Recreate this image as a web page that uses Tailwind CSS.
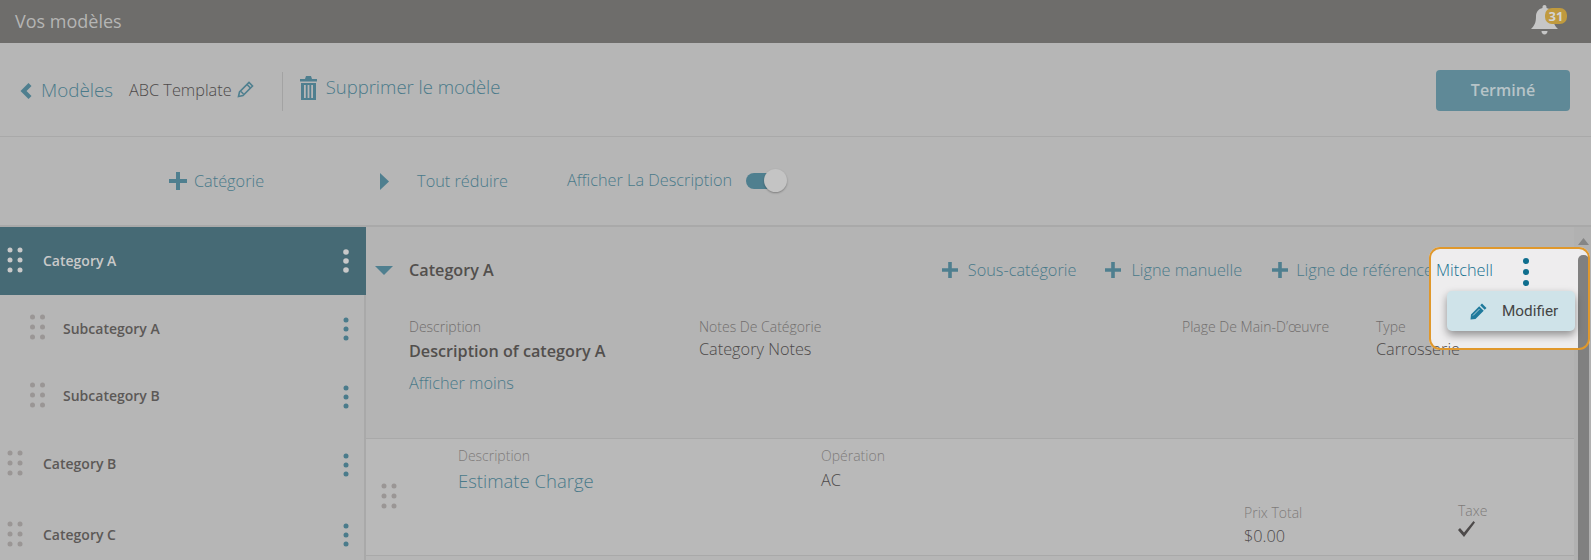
<!DOCTYPE html>
<html>
<head>
<meta charset="UTF-8">
<title>Vos modèles</title>
<script src="https://cdn.jsdelivr.net/npm/@tailwindcss/browser@4"></script>
</head>
<body class="font-['Open_Sans',sans-serif] bg-[#b6b6b6]">
<div class="relative w-[1591px] h-[560px] overflow-hidden bg-[#b6b6b6]">

  <!-- top bar -->
  <header class="h-[43px] bg-[#6e6d6b] flex items-center justify-between pl-[15px] pr-[24px]">
    <span class="text-[18px] text-[#b5b5b4]">Vos modèles</span>
    <div class="relative w-[36px] h-[43px]">
      <svg class="absolute left-0 top-[5px]" width="27" height="30" viewBox="0 0 27 30" fill="#c6c6c6"><path d="M13.5 0c1.2 0 2 .9 2 2v1c4.200 .9 6.500 4.200 6.500 8.500 0 6 1.500 9 5 12.500H0c3.500-3.500 5-6.500 5-12.500C5 7.200 7.300 3.900 11.500 3V2c0-1.100.8-2 2-2z"/><path d="M10.500 26h6c0 2-1.300 3.500-3 3.500s-3-1.500-3-3.500z"/></svg>
      <span class="absolute left-[14px] top-[8px] w-[22px] h-[16px] rounded-[7px] bg-[#c09a3e] text-[#d4d4d4] text-[13px] font-bold leading-[16px] text-center">31</span>
    </div>
  </header>

  <!-- title row -->
  <div class="h-[94px] border-b border-[#a9a9a9] flex items-center relative">
    <svg class="ml-[20px] mt-[3px]" width="12" height="16" viewBox="0 0 12 16" fill="#4f7f8f"><path d="M8.500 0L11.500 3 6.500 8l5 5-3 3L.5 8z"/></svg>
    <span class="ml-[9px] mt-[2px] text-[18.800px] font-light text-[#4a7a8a]">Modèles</span>
    <span class="ml-[16px] mt-[1px] text-[16.300px] font-light text-[#4d4a4a]">ABC Template</span>
    <svg class="ml-[5px] mt-[-1px]" width="17" height="17" viewBox="0 0 17 17" fill="none" stroke="#4f7f8f" stroke-width="1.600"><path d="M1.500 15.500l1-4.500L12 1.500l3.500 3.500L6 14.500z"/><path d="M10 3.500l3.500 3.500M4 10.500l2.500 2.500"/></svg>
    <div class="ml-[28px] w-px h-[39px] mt-[4px] bg-[#a3a3a3]"></div>
    <svg class="ml-[17px] -mt-[4px]" width="17" height="24" viewBox="0 0 17 24" fill="#4f7f8f"><path d="M6 0h5l1 3h5v2.500H0V3h5z"/><path fill-rule="evenodd" d="M1 7h15v17H1zM4 9v13h1.800V9zm3.600 0v13h1.800V9zm3.600 0v13H13V9z"/></svg>
    <span class="ml-[9px] -mt-[5px] text-[18.500px] font-light text-[#4a7a8a]">Supprimer le modèle</span>
    <button class="ml-auto mr-[21px] mt-[1px] w-[134px] h-[41px] rounded-[4px] bg-[#5f8997] text-[#b7c4c8] text-[16px] font-semibold">Terminé</button>
  </div>

  <!-- toolbar -->
  <div class="h-[90px] border-b-2 border-[#a9a9a9] flex items-center text-[16.300px] font-light text-[#4a7a8a]">
    <svg class="ml-[169px]" width="18" height="18" viewBox="0 0 18 18" fill="#4f7f8f"><path d="M7 0h4v7h7v4h-7v7H7v-7H0V7h7z"/></svg>
    <span class="ml-[7px] mt-[1px]">Catégorie</span>
    <svg class="ml-[116px]" width="9" height="17" viewBox="0 0 9 17" fill="#4f7f8f"><path d="M0 0l9 8.500L0 17z"/></svg>
    <span class="ml-[28px]">Tout réduire</span>
    <span class="ml-[59px] -mt-[2px]">Afficher La Description</span>
    <div class="relative ml-[14px] w-[41px] h-[24px]">
      <div class="absolute left-0 top-[4px] w-[38px] h-[16px] rounded-full bg-[#4f7f8f]"></div>
      <div class="absolute left-[18px] top-0 w-[23px] h-[23px] rounded-full bg-[#c4c4c4] shadow-[0_1px_2px_rgba(0,0,0,0.3)]"></div>
    </div>
  </div>

  <div class="flex h-[333px]">
    <!-- sidebar -->
    <aside class="w-[366px] shrink-0 border-r-2 border-[#a9a9a9]">
      <div class="h-[68px] -mr-[2px] bg-[#466a75] flex items-center pl-[7px] pr-[17px] relative">
        <svg class="-mt-[2px]" width="16" height="26" viewBox="0 0 16 26" fill="#c9c9c9"><circle cx="3" cy="3" r="2.500"/><circle cx="13" cy="3" r="2.500"/><circle cx="3" cy="13" r="2.500"/><circle cx="13" cy="13" r="2.500"/><circle cx="3" cy="23" r="2.500"/><circle cx="13" cy="23" r="2.500"/></svg>
        <span class="ml-[20px] -mt-[2px] text-[14px] font-semibold text-[#c9c9c9]">Category A</span>
        <svg class="ml-auto" width="6" height="24" viewBox="0 0 6 24" fill="#c9c9c9"><circle cx="3" cy="3" r="2.800"/><circle cx="3" cy="12" r="2.800"/><circle cx="3" cy="21" r="2.800"/></svg>
      </div>
      <div class="h-[68px] flex items-center pl-[30px] pr-[15px]">
        <svg class="-mt-[4px]" width="16" height="26" viewBox="0 0 16 26" fill="#9a9695"><circle cx="2.500" cy="3" r="2.500"/><circle cx="12.500" cy="3" r="2.500"/><circle cx="2.500" cy="13" r="2.500"/><circle cx="12.500" cy="13" r="2.500"/><circle cx="2.500" cy="23" r="2.500"/><circle cx="12.500" cy="23" r="2.500"/></svg>
        <span class="ml-[17px] -mt-[2px] text-[14px] font-semibold text-[#5c5957]">Subcategory A</span>
        <svg class="ml-auto" width="6" height="24" viewBox="0 0 6 24" fill="#4a7b8b"><circle cx="3" cy="3" r="2.500"/><circle cx="3" cy="12" r="2.500"/><circle cx="3" cy="21" r="2.500"/></svg>
      </div>
      <div class="h-[67px] flex items-center pl-[30px] pr-[15px]">
        <svg class="-mt-[3px]" width="16" height="26" viewBox="0 0 16 26" fill="#9a9695"><circle cx="2.500" cy="3" r="2.500"/><circle cx="12.500" cy="3" r="2.500"/><circle cx="2.500" cy="13" r="2.500"/><circle cx="12.500" cy="13" r="2.500"/><circle cx="2.500" cy="23" r="2.500"/><circle cx="12.500" cy="23" r="2.500"/></svg>
        <span class="ml-[17px] -mt-[2px] text-[14px] font-semibold text-[#5c5957]">Subcategory B</span>
        <svg class="ml-auto" width="6" height="24" viewBox="0 0 6 24" fill="#4a7b8b"><circle cx="3" cy="3" r="2.500"/><circle cx="3" cy="12" r="2.500"/><circle cx="3" cy="21" r="2.500"/></svg>
      </div>
      <div class="h-[69px] flex items-center pl-[7px] pr-[15px]">
        <svg class="-mt-[4px]" width="16" height="26" viewBox="0 0 16 26" fill="#9a9695"><circle cx="3" cy="3" r="2.500"/><circle cx="13" cy="3" r="2.500"/><circle cx="3" cy="13" r="2.500"/><circle cx="13" cy="13" r="2.500"/><circle cx="3" cy="23" r="2.500"/><circle cx="13" cy="23" r="2.500"/></svg>
        <span class="ml-[20px] -mt-[2px] text-[14px] font-semibold text-[#5c5957]">Category B</span>
        <svg class="ml-auto" width="6" height="24" viewBox="0 0 6 24" fill="#4a7b8b"><circle cx="3" cy="3" r="2.500"/><circle cx="3" cy="12" r="2.500"/><circle cx="3" cy="21" r="2.500"/></svg>
      </div>
      <div class="h-[72px] flex items-center pl-[7px] pr-[15px]">
        <svg class="-mt-[2px]" width="16" height="26" viewBox="0 0 16 26" fill="#9a9695"><circle cx="3" cy="3" r="2.500"/><circle cx="13" cy="3" r="2.500"/><circle cx="3" cy="13" r="2.500"/><circle cx="13" cy="13" r="2.500"/><circle cx="3" cy="23" r="2.500"/><circle cx="13" cy="23" r="2.500"/></svg>
        <span class="ml-[20px] -mt-[2px] text-[14px] font-semibold text-[#5c5957]">Category C</span>
        <svg class="ml-auto" width="6" height="24" viewBox="0 0 6 24" fill="#4a7b8b"><circle cx="3" cy="3" r="2.500"/><circle cx="3" cy="12" r="2.500"/><circle cx="3" cy="21" r="2.500"/></svg>
      </div>
    </aside>

    <!-- main column -->
    <main class="flex-1 min-w-0">
      <section class="h-[212px] bg-[#b4b4b4] border-b border-[#a9a9a9]">
        <div class="h-[86px] flex items-center">
          <svg class="ml-[9px] mt-[1px]" width="18" height="9" viewBox="0 0 18 9" fill="#4f7f8f"><path d="M0 0h18L9 9z"/></svg>
          <span class="ml-[16px] text-[16.200px] font-semibold text-[#524f4d]">Category A</span>
          <svg class="ml-[448px]" width="16" height="16" viewBox="0 0 16 16" fill="#4f7f8f"><path d="M6.200 0h3.600v6.200H16v3.600H9.800V16H6.200V9.800H0V6.200h6.200z"/></svg>
          <span class="ml-[10px] text-[16.300px] font-light text-[#4a7a8a]">Sous-catégorie</span>
          <svg class="ml-[29px]" width="16" height="16" viewBox="0 0 16 16" fill="#4f7f8f"><path d="M6.200 0h3.600v6.200H16v3.600H9.800V16H6.200V9.800H0V6.200h6.200z"/></svg>
          <span class="ml-[10px] text-[16.300px] font-light text-[#4a7a8a]">Ligne manuelle</span>
          <svg class="ml-[30px]" width="16" height="16" viewBox="0 0 16 16" fill="#4f7f8f"><path d="M6.200 0h3.600v6.200H16v3.600H9.800V16H6.200V9.800H0V6.200h6.200z"/></svg>
          <span class="ml-[8px] text-[16.300px] font-light text-[#4a7a8a] whitespace-nowrap">Ligne de référence</span>
        </div>
        <div class="flex pt-[4px]">
          <div class="ml-[43px] w-[290px]">
            <div class="text-[14px] leading-[20px] font-light text-[#716e6d]">Description</div>
            <div class="mt-[2px] text-[16.200px] leading-[24px] font-semibold text-[#524f4d]">Description of category A</div>
            <div class="mt-[9px] text-[16.300px] leading-[22px] font-light text-[#4a7a8a]">Afficher moins</div>
          </div>
          <div class="w-[483px]">
            <div class="text-[14px] leading-[20px] font-light text-[#716e6d]">Notes De Catégorie</div>
            <div class="text-[16.300px] leading-[24px] font-light text-[#4d4a4a]">Category Notes</div>
          </div>
          <div class="w-[194px]">
            <div class="text-[14px] leading-[20px] font-light text-[#716e6d]">Plage De Main-D’œuvre</div>
          </div>
          <div class="relative z-20">
            <div class="text-[14px] leading-[20px] font-light text-[#716e6d]">Type</div>
            <div class="text-[16.300px] leading-[24px] font-light text-[#4d4a4a]">Carrosserie</div>
          </div>
        </div>
      </section>
      <section class="h-[117px] bg-[#b9b9b9] border-b border-[#a9a9a9] flex">
        <svg class="ml-[15px] mt-[44px]" width="16" height="26" viewBox="0 0 16 26" fill="#9a9695"><circle cx="3" cy="3" r="2.500"/><circle cx="13" cy="3" r="2.500"/><circle cx="3" cy="13" r="2.500"/><circle cx="13" cy="13" r="2.500"/><circle cx="3" cy="23" r="2.500"/><circle cx="13" cy="23" r="2.500"/></svg>
        <div class="ml-[61px] w-[363px] pt-[7px]">
          <div class="text-[14px] leading-[20px] font-light text-[#7e7b7a]">Description</div>
          <div class="mt-[1px] text-[18.500px] leading-[28px] font-light text-[#4a7a8a]">Estimate Charge</div>
        </div>
        <div class="w-[423px] pt-[7px]">
          <div class="text-[14px] leading-[20px] font-light text-[#7e7b7a]">Opération</div>
          <div class="text-[16.300px] leading-[28px] font-light text-[#4d4a4a]">AC</div>
        </div>
        <div class="w-[214px] pt-[64px]">
          <div class="text-[14px] leading-[20px] font-light text-[#7e7b7a]">Prix Total</div>
          <div class="mt-[1px] text-[16.300px] leading-[24px] font-light text-[#4d4a4a]">$0.00</div>
        </div>
        <div class="pt-[62px]">
          <div class="text-[14px] leading-[20px] font-light text-[#7e7b7a]">Taxe</div>
          <svg width="17" height="16" viewBox="0 0 17 16" fill="#4d4a4a"><path d="M0 9l2-2 4 4.500L15.500 0 17 1.500 6 16z"/></svg>
        </div>
      </section>
    </main>

    <!-- scrollbar -->
    <div class="w-[17px] shrink-0 bg-[#b1b1b1] pl-[4px] pr-[2px] pt-[11px]">
      <svg width="11" height="7" viewBox="0 0 11 7" fill="#858585"><path d="M5.500 0L11 7H0z"/></svg>
      <div class="relative z-20 mt-[10px] h-[310px] rounded-t-[5px] bg-[#808080]"></div>
    </div>
  </div>

  <!-- highlighted region over the dimmed page -->
  <div class="absolute z-10 left-[1429px] top-[247px] w-[161px] h-[103px] rounded-[11px] bg-[#eeedee]">
    <span class="absolute left-[7px] top-[11px] text-[16.300px] leading-[24px] font-light text-[#14708f]">Mitchell</span>
    <svg class="absolute left-[94px] top-[11px]" width="6" height="28" viewBox="0 0 6 28" fill="#0f6e8e"><circle cx="3" cy="3" r="3"/><circle cx="3" cy="14" r="3"/><circle cx="3" cy="25" r="3"/></svg>
  </div>
  <div class="absolute z-30 left-[1429px] top-[247px] w-[161px] h-[103px] rounded-[11px] border-2 border-[#e0982c]"></div>
  <div class="absolute z-30 left-[1447px] top-[291px] w-[128px] h-[40px] rounded-[5px] bg-[#cfe3e9] shadow-[0_4px_8px_rgba(0,0,0,0.4)] flex items-center">
    <svg class="ml-[23px]" width="17" height="17" viewBox="0 0 17 17" fill="#1f7a9c"><path d="M12 0.500l4.500 4.500-1.800 1.800-4.500-4.500zM9.200 3.300l4.500 4.500L5.500 16 0.500 16.500 1 11.500z"/><path d="M3 12.500L9.500 6" stroke="#cfe3e9" stroke-width="0.800"/></svg>
    <span class="ml-[15px] font-['Roboto',sans-serif] text-[15.300px] text-[#454545]">Modifier</span>
  </div>
</div>
</body>
</html>
